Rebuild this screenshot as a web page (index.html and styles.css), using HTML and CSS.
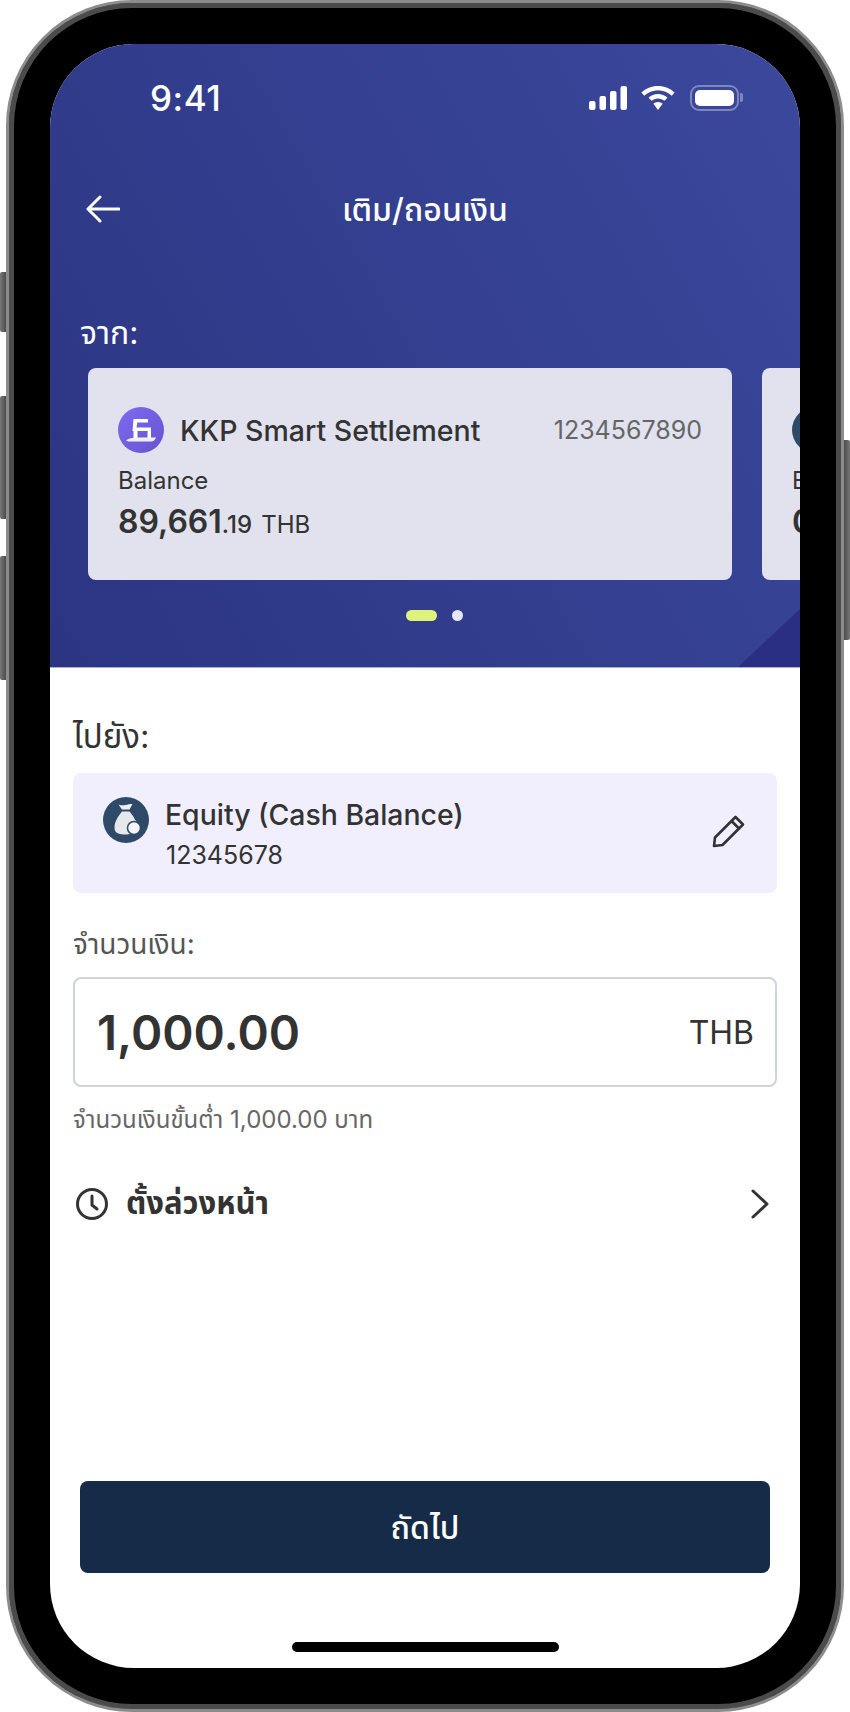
FILE: index.html
```html
<!DOCTYPE html>
<html lang="th">
<head>
    <meta charset="UTF-8">
    <meta name="viewport" content="width=device-width, initial-scale=1.0">
    <title>เติม/ถอนเงิน</title>
    <link rel="stylesheet" href="styles.css">
</head>
<body>

<div class="phone">
    <span class="side-btn side-1"></span>
    <span class="side-btn side-2"></span>
    <span class="side-btn side-3"></span>
    <span class="side-btn side-4"></span>

    <div class="screen">
        <header class="hero">
            <div class="hero-corner"></div>

            <div class="status-bar">
                <span class="clock">9:41</span>
                <div class="status-icons">
                    <svg class="ic-signal" viewBox="0 0 38 24" fill="#fff">
                        <rect x="0" y="15" width="6.5" height="9" rx="2"/>
                        <rect x="10.5" y="10" width="6.5" height="14" rx="2"/>
                        <rect x="21" y="5" width="6.5" height="19" rx="2"/>
                        <rect x="31.5" y="0" width="6.5" height="24" rx="2"/>
                    </svg>
                    <svg class="ic-wifi" viewBox="0 0 34 24" fill="#fff">
                        <path d="M17 0C10.500 0 4.700 2.500 .3 6.600L3.300 9.700C6.900 6.400 11.700 4.300 17 4.300s10.100 2.100 13.700 5.400l3-3.100C29.300 2.500 23.500 0 17 0z"/>
                        <path d="M17 8C13.600 8 10.200 9.300 7.500 11.700l3.100 3.100C12.300 13.300 14.600 12.400 17 12.400s4.700 .9 6.400 2.400l3.100-3.100C23.800 9.300 20.400 8 17 8z"/>
                        <path d="M17 16c-1.800 0-3.400 .7-4.600 1.800L17 24l4.600-6.200C20.400 16.700 18.800 16 17 16z"/>
                    </svg>
                    <div class="battery"><span></span></div>
                </div>
            </div>

            <div class="nav-bar">
                <svg class="ic-back" viewBox="0 0 34 28" fill="none" stroke="#fff" stroke-width="3" stroke-linecap="round" stroke-linejoin="round">
                    <path d="M33 14H2M14 2 2 14l12 12"/>
                </svg>
                <div class="nav-title">เติม/ถอนเงิน</div>
            </div>

            <div class="from-label">จาก:</div>

            <div class="carousel">
                <div class="acc-card">
                    <div class="acc-top">
                        <div class="logo-kkp">
                            <svg viewBox="0 0 46 46">
                                <path d="M15.500 12H30V15.500H19.300L18.500 20.500H33V31H29.500V24H19.500V31H15.500V24H14.500z" fill="#fff"/>
                                <path d="M8 33.500C12 30.500 16 30.500 23 30.500S34 30.500 38 30.500C37 33 35.500 34.500 33 34.500H13C11 34.500 9.500 34.500 8 33.500z" fill="#f1eff9"/>
                            </svg>
                        </div>
                        <span class="acc-name">KKP Smart Settlement</span>
                        <span class="acc-no">1234567890</span>
                    </div>
                    <div class="acc-label">Balance</div>
                    <div class="acc-amount">89,661<small>.19</small> <em>THB</em></div>
                </div>
                <div class="acc-card">
                    <div class="acc-top">
                        <div class="logo-bag small-bag"></div>
                        <span class="acc-name">Equity (Cash Balance)</span>
                    </div>
                    <div class="acc-label">Balance</div>
                    <div class="acc-amount">0<small>.00</small> <em>THB</em></div>
                </div>
            </div>

            <div class="dots">
                <span class="dot-on"></span>
                <span class="dot-off"></span>
            </div>
        </header>

        <main class="body-area">
            <div class="to-label">ไปยัง:</div>

            <div class="to-box">
                <div class="logo-bag">
                    <svg viewBox="0 0 46 46">
                        <path d="M15.500 7.500C18 8.500 20.500 8.500 22.500 8 24.500 7.500 27 7 29.500 7L26.500 12.500H19z" fill="#eef0f3"/>
                        <path d="M19 14.500H26.500C29 17.500 31 20 32 23 36 24 33 37.500 24 37.500 15 37.500 11.500 36 11.500 30.500 11.500 24 16 18.500 19 14.500z" fill="#e6e8ec"/>
                        <circle cx="31" cy="31" r="6.500" fill="#f4f5f7" stroke="#2f4a68" stroke-width="1.500"/>
                    </svg>
                </div>
                <div class="to-text">
                    <div class="to-name">Equity (Cash Balance)</div>
                    <div class="to-no">12345678</div>
                </div>
                <svg class="ic-edit" viewBox="0 0 34 34" fill="none" stroke="#333" stroke-width="2.600" stroke-linejoin="round">
                    <path d="M2 32 3 23.500 23.500 3 31 10.500 10.500 31z"/>
                    <path d="M19.500 7 27 14.500"/>
                </svg>
            </div>

            <div class="amount-label">จำนวนเงิน:</div>
            <div class="amount-box">
                <span class="amount-value">1,000.00</span>
                <span class="amount-cur">THB</span>
            </div>
            <div class="amount-hint">จำนวนเงินขั้นต่ำ 1,000.00 บาท</div>

            <div class="schedule-row">
                <svg class="ic-clock" viewBox="0 0 34 34" fill="none" stroke="#333" stroke-width="3" stroke-linecap="round" stroke-linejoin="round">
                    <circle cx="17" cy="17" r="14.500"/>
                    <path d="M17 9V18L22 22"/>
                </svg>
                <span class="schedule-text">ตั้งล่วงหน้า</span>
                <svg class="ic-chevron" viewBox="0 0 18 30" fill="none" stroke="#333" stroke-width="3" stroke-linecap="round" stroke-linejoin="round">
                    <path d="M2 2 16 15 2 28"/>
                </svg>
            </div>

            <button class="btn-next">ถัดไป</button>
            <div class="home-bar"></div>
        </main>
    </div>
</div>

</body>
</html>
```

FILE: styles.css
```css
* { box-sizing: border-box; }

body {
    margin: 0;
    background: #fff;
    font-family: Inter, "Noto Sans", "Noto Sans Thai", sans-serif;
    color: #333;
}

/* --- FRAME --- */
.phone {
    position: relative;
    width: 838px;
    height: 1712px;
    margin: 0 6px;
    padding: 41px;
    background: #000;
    border: 3px solid #8c8c8c;
    border-radius: 126px;
    box-shadow: inset 0 0 0 5px #4b4b4b;
}

.side-btn {
    position: absolute;
    width: 6px;
    background: linear-gradient(90deg, #777, #4b4b4b);
}

.side-1 { left: -9px; top: 269px; height: 60px; border-radius: 2px 0 0 2px; }
.side-2 { left: -9px; top: 393px; height: 123px; border-radius: 2px 0 0 2px; }
.side-3 { left: -9px; top: 553px; height: 124px; border-radius: 2px 0 0 2px; }
.side-4 { right: -9px; top: 437px; height: 200px; border-radius: 0 2px 2px 0; background: linear-gradient(90deg, #4b4b4b, #777); }

.screen {
    display: flex;
    flex-direction: column;
    height: 1624px;
    background: #fff;
    border-radius: 84px;
    overflow: hidden;
}

/* --- HEADER --- */
.hero {
    position: relative;
    height: 624px;
    flex-shrink: 0;
    background: linear-gradient(60deg, #2b3582, #3b489c);
    border-bottom: 1px solid #a9aed6;
    color: #fff;
}

.hero-corner {
    position: absolute;
    right: 0;
    bottom: 0;
    width: 62px;
    height: 58px;
    background: #2a2f83;
    clip-path: polygon(100% 0, 100% 100%, 0 100%);
}

.status-bar {
    display: flex;
    justify-content: space-between;
    align-items: center;
    height: 26px;
    margin-top: 41px;
    padding: 0 61px 0 100px;
}

.clock {
    font-size: 35px;
    font-weight: 500;
    letter-spacing: 0.5px;
}

.status-icons {
    display: flex;
    align-items: center;
}

.ic-signal { width: 38px; height: 24px; }
.ic-wifi { width: 34px; height: 24px; margin-left: 14px; }

.battery {
    position: relative;
    width: 49px;
    height: 26px;
    margin-left: 15px;
    padding: 3px;
    border: 2px solid rgba(255, 255, 255, 0.35);
    border-radius: 9px;
}

.battery::after {
    content: "";
    position: absolute;
    right: -6px;
    top: 6px;
    width: 3px;
    height: 9px;
    background: rgba(255, 255, 255, 0.35);
    border-radius: 0 2px 2px 0;
}

.battery span {
    display: block;
    height: 100%;
    background: #fff;
    border-radius: 5px;
}

.nav-bar {
    position: relative;
    display: flex;
    justify-content: center;
    align-items: center;
    height: 44px;
    margin-top: 78px;
}

.ic-back {
    position: absolute;
    left: 36px;
    top: 6px;
    width: 34px;
    height: 28px;
}

.nav-title {
    font-size: 32px;
    font-weight: 500;
}

.from-label {
    margin: 80px 0 0 30px;
    font-size: 32px;
    line-height: 40px;
}

.carousel {
    display: flex;
    gap: 30px;
    margin: 15px 0 0 38px;
    width: 712px;
    overflow: hidden;
}

.acc-card {
    flex: 0 0 644px;
    height: 212px;
    padding: 39px 30px 0;
    background: #e1e2ee;
    border-radius: 8px;
    color: #333;
}

.acc-top {
    display: flex;
    align-items: center;
    height: 46px;
}

.logo-kkp {
    width: 46px;
    height: 46px;
    flex-shrink: 0;
    margin-right: 16px;
    background: linear-gradient(135deg, #7d6af0, #6753d0);
    border-radius: 50%;
}

.logo-kkp svg, .logo-bag svg { display: block; width: 46px; height: 46px; }

.acc-name {
    font-size: 28.500px;
    font-weight: 500;
    white-space: nowrap;
}

.acc-no {
    margin-left: auto;
    font-size: 25px;
    color: #666;
}

.acc-label {
    margin-top: 11px;
    font-size: 24px;
    line-height: 34px;
}

.acc-amount {
    margin-top: 2px;
    font-size: 32px;
    line-height: 44px;
    font-weight: 600;
}

.acc-amount small {
    font-size: 24px;
    font-weight: 500;
}

.acc-amount em {
    margin-left: 1px;
    font-size: 24px;
    font-weight: 400;
    font-style: normal;
}

.dots {
    display: flex;
    justify-content: center;
    align-items: center;
    gap: 15px;
    margin-top: 30px;
    padding-left: 18px;
}

.dot-on { width: 31px; height: 11px; background: #dff27a; border-radius: 6px; }
.dot-off { width: 11px; height: 11px; background: #e6e7f2; border-radius: 50%; }

/* --- CONTENU --- */
.body-area {
    flex: 1;
    padding: 0 23px;
}

.to-label {
    margin-top: 46px;
    font-size: 33px;
    line-height: 44px;
}

.to-box {
    display: flex;
    align-items: center;
    height: 120px;
    margin-top: 15px;
    padding: 0 31px 0 30px;
    background: #f1effe;
    border-radius: 8px;
}

.logo-bag {
    width: 46px;
    height: 46px;
    flex-shrink: 0;
    margin-top: -27px;
    margin-right: 16px;
    background: #2f4a68;
    border-radius: 50%;
}

.small-bag { margin-top: 0; }

.to-text { flex: 1; }

.to-name {
    margin-top: 1px;
    font-size: 28.400px;
    line-height: 40px;
    font-weight: 500;
}

.to-no {
    margin-top: 2px;
    margin-left: 1px;
    font-size: 25px;
    line-height: 36px;
}

.ic-edit { width: 34px; height: 34px; margin-top: -4px; }

.amount-label {
    margin-top: 33px;
    font-size: 28px;
    line-height: 36px;
    color: #555;
}

.amount-box {
    display: flex;
    justify-content: space-between;
    align-items: center;
    height: 110px;
    margin-top: 15px;
    padding: 0 21px 0 22px;
    background: #fff;
    border: 2px solid #cfd4da;
    border-radius: 8px;
}

.amount-value {
    font-size: 47.500px;
    font-weight: 600;
}

.amount-cur { font-size: 32px; }

.amount-hint {
    margin-top: 16px;
    font-size: 24px;
    line-height: 34px;
    color: #666;
}

.schedule-row {
    display: flex;
    align-items: center;
    height: 40px;
    margin-top: 47px;
    padding: 0 8px 0 2px;
}

.ic-clock { width: 34px; height: 34px; }

.schedule-text {
    flex: 1;
    margin-left: 17px;
    font-size: 31px;
    font-weight: 700;
}

.ic-chevron { width: 18px; height: 30px; }

.btn-next {
    display: block;
    width: 690px;
    height: 92px;
    margin: 257px 0 0 7px;
    padding-top: 4px;
    background: #162b47;
    border: none;
    border-radius: 8px;
    color: #fff;
    font-family: inherit;
    font-size: 32px;
    font-weight: 500;
}

.home-bar {
    width: 267px;
    height: 10px;
    margin: 69px 0 0 219px;
    background: #000;
    border-radius: 5px;
}
```
